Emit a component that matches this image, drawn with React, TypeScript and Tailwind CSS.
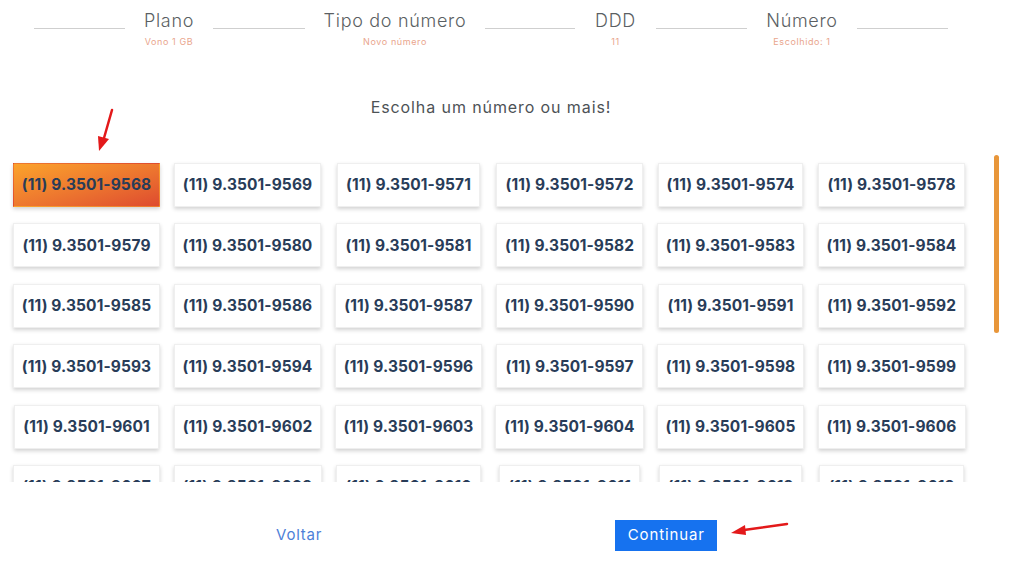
import React from "react";

const rows: string[][] = [
  ["9568", "9569", "9571", "9572", "9574", "9578"],
  ["9579", "9580", "9581", "9582", "9583", "9584"],
  ["9585", "9586", "9587", "9590", "9591", "9592"],
  ["9593", "9594", "9596", "9597", "9598", "9599"],
  ["9601", "9602", "9603", "9604", "9605", "9606"],
  ["9607", "9609", "9610", "9611", "9612", "9613"],
];

function Line({ w }: { w: string }) {
  return <div className={`${w} h-px bg-[#cfcfcf] mt-[28px] shrink-0`} />;
}

function Step({ w, label, sub }: { w: string; label: string; sub: string }) {
  return (
    <div className={`${w} shrink-0 flex flex-col items-center`}>
      <div className="text-[18px] leading-[20px] mt-[11px] text-[#5b5f63] font-light tracking-[0.7px] whitespace-nowrap">
        {label}
      </div>
      <div className="text-[9px] leading-[12px] mt-[5px] text-[#e9a58d] tracking-[0.6px] whitespace-nowrap">{sub}</div>
    </div>
  );
}

export default function App() {
  const all = rows.flat();
  return (
    <div
      className="relative w-[1024px] h-[563px] bg-white overflow-hidden"
      style={{ fontFamily: "Inter, 'Noto Sans', sans-serif" }}
    >
      {/* Stepper header */}
      <div className="flex pl-[34px]">
        <Line w="w-[91px]" />
        <Step w="w-[88px]" label="Plano" sub="Vono 1 GB" />
        <Line w="w-[92px]" />
        <Step w="w-[180px]" label="Tipo do número" sub="Novo número" />
        <Line w="w-[90px]" />
        <Step w="w-[81px]" label="DDD" sub="11" />
        <Line w="w-[91px]" />
        <Step w="w-[110px]" label="Número" sub="Escolhido: 1" />
        <Line w="w-[91px]" />
      </div>

      <div className="mt-[49px] text-center text-[16px] leading-[20px] text-[#4d5256] tracking-[0.9px]">
        <span className="relative left-[-21px]">Escolha um número ou mais!</span>
      </div>

      {/* Number list with scrollbar */}
      <div className="mt-[33px] flex">
        <div className="h-[332px] overflow-hidden pt-[13px]">
          <div className="ml-[6px] w-[966px] grid grid-cols-6 gap-y-[16.4px] justify-items-center">
            {all.map((n, i) => (
              <div
                key={n}
                className={`h-[44px] px-[8px] flex items-center text-[15.5px] font-bold tracking-[0.1px] text-[#283c58] shadow-[0_2px_4px_rgba(0,0,0,0.18)] border border-[#efefef] ${
                  i === 0 ? "bg-linear-to-br from-[#fba32b] to-[#de4a2f] border-transparent text-[#3a3446]" : "bg-white"
                }`}
              >
                (11) 9.3501-{n}
              </div>
            ))}
          </div>
        </div>
        <div className="ml-[22px] mt-[5px] w-[5px] h-[178px] rounded-full bg-[#e8963a]" />
      </div>

      {/* Bottom actions */}
      <div className="mt-[38px] flex items-center">
        <div className="ml-[276px] text-[15px] text-[#4d7fd8] tracking-[0.8px]">Voltar</div>
        <div className="ml-[293px] w-[102px] h-[31px] bg-[#1672ef] text-white text-[15px] tracking-[0.9px] flex items-center justify-center">
          Continuar
        </div>
      </div>

      {/* Red arrows overlay */}
      <svg className="absolute left-0 top-0" width="1024" height="563" viewBox="0 0 1024 563">
        <line x1="112" y1="110" x2="104" y2="138" stroke="#e3191a" strokeWidth="2.5" strokeLinecap="round" />
        <polygon points="99,151 98,136 109,139" fill="#e3191a" />
        <line x1="787" y1="524" x2="744" y2="530" stroke="#e3191a" strokeWidth="2.5" strokeLinecap="round" />
        <polygon points="731,533 745,525 746,535" fill="#e3191a" />
      </svg>
    </div>
  );
}
